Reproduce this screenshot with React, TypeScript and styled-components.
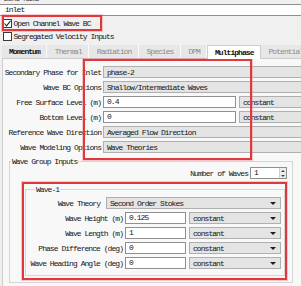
import React from "react";
import styled, { createGlobalStyle } from "styled-components";

const GlobalStyle = createGlobalStyle`
  html, body {
    margin: 0;
    padding: 0;
    background: #f0f0f0;
  }
  body {
    font-family: "Liberation Mono", "DejaVu Sans Mono", monospace;
    font-size: 8px;
    letter-spacing: -0.95px;
    color: #161616;
  }
  * {
    box-sizing: border-box;
  }
`;

const Screen = styled.div`
  position: relative;
  width: 301px;
  height: 286px;
  overflow: hidden;
`;

// "Zone Name" sits mostly above the visible area
const ZoneLabel = styled.div`
  height: 4px;
  overflow: hidden;
  padding-left: 4px;
  color: #444;

  span {
    display: block;
    line-height: 10px;
    margin-top: -6px;
  }
`;

const TextField = styled.div`
  height: 12px;
  width: 310px;
  background: #fff;
  border: 1px solid #8e8e8e;
  border-left: none;
  padding-left: 5px;
  line-height: 10px;
`;

const CheckList = styled.div`
  padding: 1px 0 2px 3px;
`;

const CheckRow = styled.div`
  display: flex;
  align-items: center;
  gap: 1.5px;
  height: 13px;
`;

const CheckBox = styled.span`
  width: 9px;
  height: 9px;
  flex: none;
  background: #fff;
  border: 1px solid #3a3a3a;
  display: flex;
  align-items: center;
  justify-content: center;
`;

const TabBar = styled.div`
  display: flex;
  height: 13px;
  padding-left: 1.5px;
  position: relative;
  z-index: 1;
`;

const Tab = styled.div<{ $active?: boolean; $dim?: boolean }>`
  height: ${(p) => (p.$active ? "14px" : "13px")};
  line-height: 13px;
  padding: 0 ${(p) => (p.$active ? "6.5px" : "7.5px")};
  white-space: nowrap;
  background: ${(p) => (p.$active ? "#fff" : "#e7e7e7")};
  color: ${(p) => (p.$dim ? "#8c8c8c" : "#111")};
  font-weight: ${(p) => (p.$dim ? "normal" : "bold")};
  border: ${(p) => (p.$active ? "1px solid #cdcdcd" : "none")};
  border-bottom: none;
  box-shadow: ${(p) => (p.$active ? "none" : "inset -1px 0 0 #fafafa")};
`;

const Panel = styled.div`
  margin-left: 2px;
  width: 310px;
  height: 240px;
  background: #f8f8f8;
  border: 1px solid #cdcdcd;
  padding-top: 7px;
`;

const Rows = styled.div<{ $pt?: number; $pb?: number }>`
  display: flex;
  flex-direction: column;
  gap: 3px;
  padding-top: ${(p) => p.$pt ?? 0}px;
  padding-bottom: ${(p) => p.$pb ?? 0}px;
`;

const FormRow = styled.div`
  display: flex;
  align-items: center;
  height: 12px;
`;

const RowLabel = styled.div<{ $w: number; $gap: number }>`
  width: ${(p) => p.$w}px;
  margin-right: ${(p) => p.$gap}px;
  flex: none;
  text-align: right;
  white-space: nowrap;
`;

const Combo = styled.div<{ $w: number }>`
  width: ${(p) => p.$w}px;
  height: 12px;
  flex: none;
  display: flex;
  align-items: center;
  justify-content: space-between;
  padding: 0 4px 0 3px;
  background: #e4e4e4;
  border: 1px solid #afafaf;
  white-space: nowrap;
`;

const Arrow = styled.span`
  width: 0;
  height: 0;
  border-left: 3px solid transparent;
  border-right: 3px solid transparent;
  border-top: 3px solid #1e1e1e;
`;

const Input = styled.div<{ $w: number }>`
  width: ${(p) => p.$w}px;
  height: 12px;
  flex: none;
  margin-right: 3px;
  padding-left: 3px;
  line-height: 10px;
  background: #fff;
  border: 1px solid #8f8f8f;
`;

const GroupBox = styled.fieldset<{ $ml: number; $w: number; $mt: number }>`
  margin: ${(p) => p.$mt}px 0 0 ${(p) => p.$ml}px;
  width: ${(p) => p.$w}px;
  min-inline-size: 0;
  padding: 0 0 6px 0;
  border: 1px solid #d6d6d6;
`;

const Legend = styled.legend<{ $ml: number }>`
  margin-left: ${(p) => p.$ml}px;
  padding: 0 1px;
  line-height: 9px;
`;

const NumberRow = styled.div`
  display: flex;
  justify-content: flex-end;
  align-items: center;
  gap: 2px;
  height: 12px;
  margin-top: 1px;
  padding-right: 5px;
`;

const SpinBox = styled.div`
  width: 37px;
  height: 12px;
  display: flex;
  background: #fff;
  border: 1px solid #8f8f8f;
  line-height: 10px;

  span {
    flex: 1;
    padding-left: 3px;
  }
`;

const SpinButtons = styled.div`
  width: 7px;
  display: flex;
  flex-direction: column;
  align-items: center;
  justify-content: space-around;
  background: #ececec;
  border-left: 1px solid #cfcfcf;

  i {
    width: 0;
    height: 0;
    border-left: 2px solid transparent;
    border-right: 2px solid transparent;
  }
  i:first-child {
    border-bottom: 2px solid #444;
  }
  i:last-child {
    border-top: 2px solid #444;
  }
`;

// red annotation boxes drawn over the screenshot
const Highlight = styled.div<{ $x: number; $y: number; $w: number; $h: number }>`
  position: absolute;
  left: ${(p) => p.$x}px;
  top: ${(p) => p.$y}px;
  width: ${(p) => p.$w}px;
  height: ${(p) => p.$h}px;
  border: 2px solid #e0393d;
  box-shadow: 0 0 0 1px rgba(232, 110, 115, 0.35);
  pointer-events: none;
`;

const topRows = [
  { label: "Secondary Phase for Inlet", value: "phase-2" },
  { label: "Wave BC Options", value: "Shallow/Intermediate Waves" },
  { label: "Free Surface Level (m)", value: "0.4", method: "constant" },
  { label: "Bottom Level (m)", value: "0", method: "constant" },
  { label: "Reference Wave Direction", value: "Averaged Flow Direction" },
  { label: "Wave Modeling Options", value: "Wave Theories" },
];

const waveRows = [
  { label: "Wave Height (m)", value: "0.125" },
  { label: "Wave Length (m)", value: "1" },
  { label: "Phase Difference (deg)", value: "0" },
  { label: "Wave Heading Angle (deg)", value: "0" },
];

const tabs = ["Momentum", "Thermal", "Radiation", "Species", "DPM", "Multiphase", "Potential"];

function App() {
  return (
    <Screen>
      <GlobalStyle />
      <ZoneLabel>
        <span>Zone Name</span>
      </ZoneLabel>
      <TextField>inlet</TextField>

      <CheckList>
        <CheckRow>
          <CheckBox>
            <svg width="7" height="7" viewBox="0 0 7 7">
              <polyline points="0.5,3.5 2.6,5.8 6.5,0.8" fill="none" stroke="#222" strokeWidth="1.1" />
            </svg>
          </CheckBox>
          Open Channel Wave BC
        </CheckRow>
        <CheckRow>
          <CheckBox />
          Segregated Velocity Inputs
        </CheckRow>
      </CheckList>

      <TabBar>
        {tabs.map((t) => (
          <Tab
            key={t}
            $active={t === "Multiphase"}
            $dim={t !== "Multiphase" && t !== "Momentum"}
          >
            {t}
          </Tab>
        ))}
      </TabBar>

      <Panel>
        <Rows>
          {topRows.map((r) => (
            <FormRow key={r.label}>
              <RowLabel $w={98} $gap={2}>
                {r.label}
              </RowLabel>
              {r.method ? (
                <>
                  <Input $w={133}>{r.value}</Input>
                  <Combo $w={80}>{r.method}</Combo>
                </>
              ) : (
                <Combo $w={220}>{r.value}</Combo>
              )}
            </FormRow>
          ))}
        </Rows>

        <GroupBox $ml={6} $w={284} $mt={4}>
          <Legend $ml={1}>Wave Group Inputs</Legend>
          <NumberRow>
            Number of Waves
            <SpinBox>
              <span>1</span>
              <SpinButtons>
                <i />
                <i />
              </SpinButtons>
            </SpinBox>
          </NumberRow>

          <GroupBox $ml={15} $w={260} $mt={6}>
            <Legend $ml={9}>Wave-1</Legend>
            <Rows $pt={3}>
              <FormRow>
                <RowLabel $w={74} $gap={6}>
                  Wave Theory
                </RowLabel>
                <Combo $w={175}>
                  Second Order Stokes
                  <Arrow />
                </Combo>
              </FormRow>
              {waveRows.map((r) => (
                <FormRow key={r.label}>
                  <RowLabel $w={97} $gap={2}>
                    {r.label}
                  </RowLabel>
                  <Input $w={61}>{r.value}</Input>
                  <Combo $w={92}>
                    constant
                    <Arrow />
                  </Combo>
                </FormRow>
              ))}
            </Rows>
          </GroupBox>
        </GroupBox>
      </Panel>

      <Highlight $x={2} $y={15} $w={100} $h={16} />
      <Highlight $x={83} $y={59} $w={169} $h={101} />
      <Highlight $x={22} $y={182} $w={265} $h={98} />
    </Screen>
  );
}

export default App;
